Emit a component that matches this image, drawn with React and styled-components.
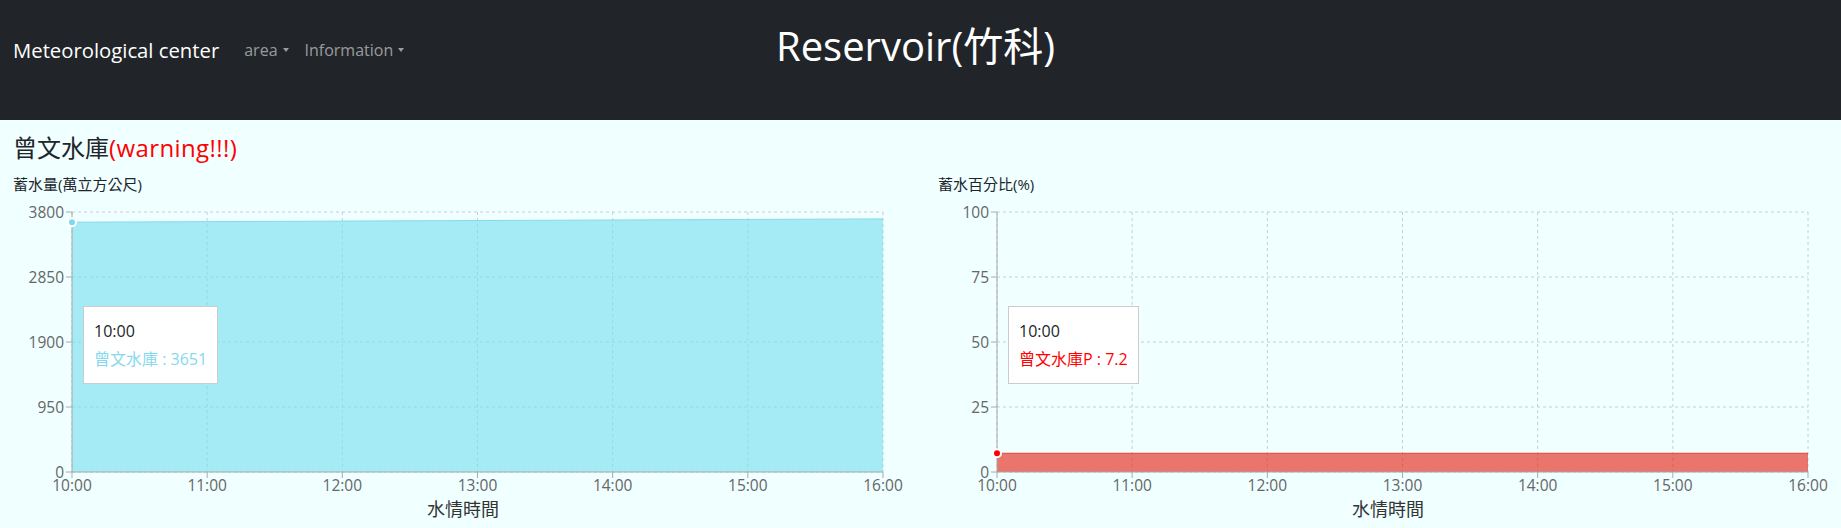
import React from 'react'
import styled, { createGlobalStyle } from 'styled-components'

const GlobalStyle = createGlobalStyle`
  html, body {
    margin: 0;
    padding: 0;
    background: #f0ffff;
    font-family: "Open Sans", "Noto Sans CJK TC", sans-serif;
    color: #212529;
  }
`

const Navbar = styled.nav`
  background: #212529;
  height: 120px;
  box-sizing: border-box;
  padding: 0 13px 20px;
  display: grid;
  grid-template-columns: 1fr auto 1fr;
  align-items: center;
`

const NavLeft = styled.div`
  display: flex;
  align-items: center;
`

const Brand = styled.span`
  color: #fff;
  font-size: 20.3px;
  margin-right: 25px;
`

const NavLink = styled.span`
  color: rgba(255, 255, 255, 0.55);
  font-size: 16px;
  margin-right: 16px;
  display: flex;
  align-items: center;
  &::after {
    content: '';
    margin-left: 5px;
    border-top: 4px solid currentColor;
    border-left: 3.5px solid transparent;
    border-right: 3.5px solid transparent;
  }
`

const PageTitle = styled.h1`
  margin: 0 10px 9px 0;
  color: #fff;
  font-weight: 400;
  font-size: 40px;
  line-height: 1.2;
`

const Main = styled.main`
  padding: 14px 0 0 13px;
`

const Heading = styled.h2`
  margin: 0;
  font-size: 24px;
  line-height: 28px;
  font-weight: 400;
  span {
    color: #f00;
    letter-spacing: 0.4px;
  }
`

const Charts = styled.div`
  display: grid;
  grid-template-columns: 925px 1fr;
  margin-top: 12px;
`

const ChartBox = styled.div`
  position: relative;
`

const ChartTitle = styled.div`
  font-size: 15px;
  line-height: 20px;
  color: #212529;
`

const Svg = styled.svg`
  display: block;
  overflow: visible;
  text {
    font-family: "Open Sans", "Noto Sans CJK TC", sans-serif;
  }
`

const Tooltip = styled.div`
  position: absolute;
  left: 70px;
  top: 132px;
  background: #fff;
  border: 1px solid #ccc;
  padding: 10px 10px;
  font-size: 16px;
  line-height: 28px;
  white-space: nowrap;
`

const TipLabel = styled.div`
  color: #212529;
`

const TipItem = styled.div`
  color: ${p => p.$color};
`

const PL = 59
const PT = 18
const PW = 811
const PH = 260
const hours = ['10:00', '11:00', '12:00', '13:00', '14:00', '15:00', '16:00']

function AreaChart({ title, max, yTicks, values, fill, stroke, dot, tip }) {
  const xs = hours.map((_, i) => PL + (PW * i) / (hours.length - 1))
  const y = v => PT + PH - (v / max) * PH
  const line = values.map((v, i) => `${i ? 'L' : 'M'}${xs[i]},${y(v)}`).join(' ')
  const area = `${line} L${PL + PW},${PT + PH} L${PL},${PT + PH} Z`
  return (
    <ChartBox>
      <ChartTitle>{title}</ChartTitle>
      <Svg width="900" height="334">
        <g stroke="#ccc" strokeDasharray="3 3">
          {yTicks.map(t => (
            <line key={t} x1={PL} x2={PL + PW} y1={y(t)} y2={y(t)} />
          ))}
          {xs.map(x => (
            <line key={x} x1={x} x2={x} y1={PT} y2={PT + PH} />
          ))}
        </g>
        <path d={area} fill={fill} fillOpacity="0.6" stroke="none" />
        <path d={line} fill="none" stroke={stroke} strokeWidth="1" />
        <g stroke="#aaa">
          <line x1={PL} x2={PL} y1={PT} y2={PT + PH} />
          <line x1={PL} x2={PL + PW} y1={PT + PH} y2={PT + PH} />
          {yTicks.map(t => (
            <line key={t} x1={PL - 6} x2={PL} y1={y(t)} y2={y(t)} />
          ))}
          {xs.map(x => (
            <line key={x} x1={x} x2={x} y1={PT + PH} y2={PT + PH + 6} />
          ))}
        </g>
        <g fill="#666" fontSize="15.5">
          {yTicks.map(t => (
            <text key={t} x={PL - 8} y={y(t)} textAnchor="end" dominantBaseline="central">{t}</text>
          ))}
          {hours.map((h, i) => (
            <text key={h} x={xs[i]} y={PT + PH + 13} textAnchor="middle" dominantBaseline="central">{h}</text>
          ))}
        </g>
        <text x="450" y="315" textAnchor="middle" dominantBaseline="central" fontSize="18" fill="#333">水情時間</text>
        <circle cx={xs[0]} cy={y(values[0])} r="4" fill={dot} stroke="#fff" strokeWidth="2" />
      </Svg>
      <Tooltip>
        <TipLabel>10:00</TipLabel>
        <TipItem $color={tip.color}>{tip.text}</TipItem>
      </Tooltip>
    </ChartBox>
  )
}

export default function App() {
  return (
    <>
      <GlobalStyle />
      <Navbar>
        <NavLeft>
          <Brand>Meteorological center</Brand>
          <NavLink>area</NavLink>
          <NavLink>Information</NavLink>
        </NavLeft>
        <PageTitle>Reservoir(竹科)</PageTitle>
        <div />
      </Navbar>
      <Main>
        <Heading>曾文水庫<span>(warning!!!)</span></Heading>
        <Charts>
          <AreaChart
            title="蓄水量(萬立方公尺)"
            max={3800}
            yTicks={[0, 950, 1900, 2850, 3800]}
            values={[3651, 3659, 3667, 3675, 3683, 3691, 3699]}
            fill="#73def0"
            stroke="#86d9ec"
            dot="#7fd8ee"
            tip={{ color: '#86d9ec', text: '曾文水庫 : 3651' }}
          />
          <AreaChart
            title="蓄水百分比(%)"
            max={100}
            yTicks={[0, 25, 50, 75, 100]}
            values={[7.2, 7.2, 7.2, 7.2, 7.2, 7.2, 7.2]}
            fill="#e6190a"
            stroke="#e0463a"
            dot="#f00"
            tip={{ color: '#f00', text: '曾文水庫P : 7.2' }}
          />
        </Charts>
      </Main>
    </>
  )
}
